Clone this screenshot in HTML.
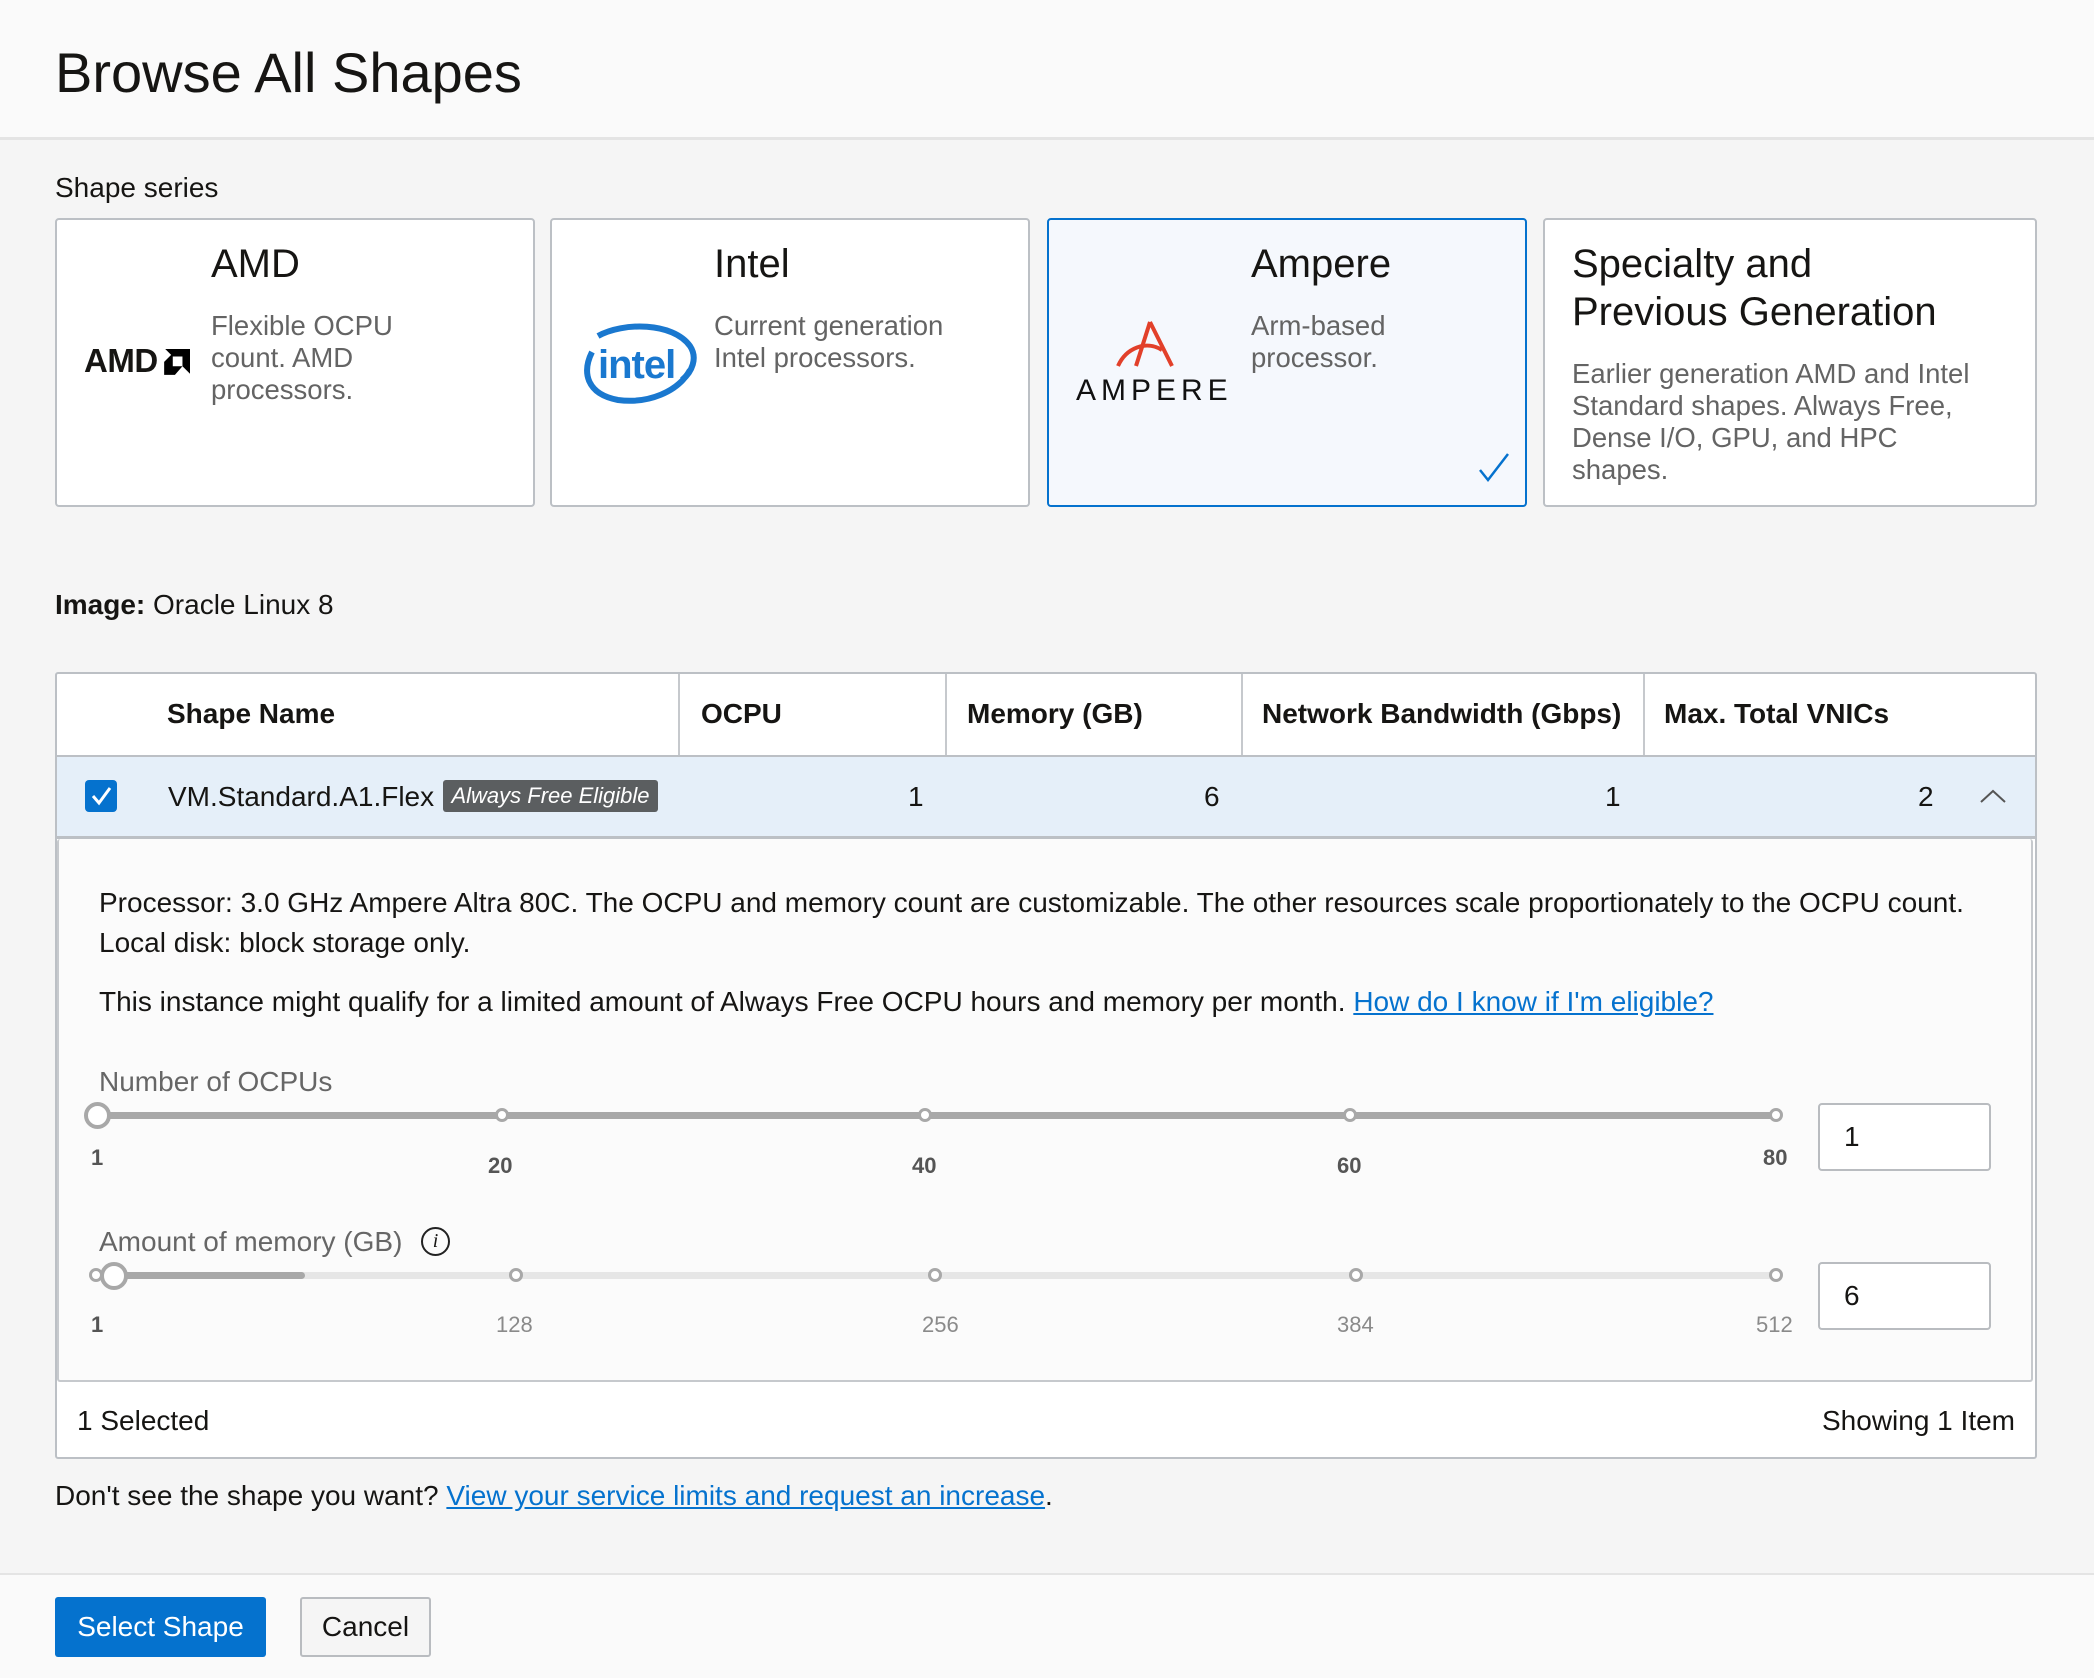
<!DOCTYPE html>
<html><head><meta charset="utf-8"><style>
*{margin:0;padding:0;box-sizing:border-box}
body{width:2094px;height:1678px;background:#f5f5f5;font-family:"Liberation Sans",Arial,sans-serif;color:#161513;position:relative;overflow:hidden}
.a{position:absolute;white-space:nowrap}
.hdr{position:absolute;left:0;top:0;width:2094px;height:140px;background:#fafafa;border-bottom:3px solid #e4e4e4}
.card{position:absolute;top:218px;height:289px;width:480px;background:#fff;border:2px solid #bcc0c5;border-radius:4px}
.ct{font-size:40px;line-height:48px;color:#161513}
.cd{font-size:27.5px;line-height:32px;color:#646464;white-space:normal}
.b28{font-size:28px;line-height:34px}
.hd{font-weight:bold;font-size:28px;line-height:34px;top:697px}
.v{font-size:28px;line-height:34px;top:780px}
.lbl{font-size:22px;font-weight:bold;color:#555;line-height:26px}
.lbl2{font-size:22px;color:#8a8a8a;line-height:26px}
.tick{position:absolute;width:14px;height:14px;border-radius:50%;border:3px solid #a8a8a8;background:#fff}
.inp{position:absolute;left:1818px;width:173px;height:68px;background:#fff;border:2px solid #b9bcc0;border-radius:4px;font-size:28px;line-height:64px;padding-left:24px}
a{color:#0572ce;text-decoration:underline}
</style></head><body>
<div class="hdr"></div>
<div class="a" style="left:55px;top:40px;font-size:56px;line-height:66px">Browse All Shapes</div>
<div class="a b28" style="left:55px;top:171px">Shape series</div>

<div class="card" style="left:55px"></div>
<div class="card" style="left:550px"></div>
<div class="card" style="left:1047px;background:#f5f8fd;border-color:#0572ce"></div>
<div class="card" style="left:1543px;width:494px"></div>

<!-- AMD -->
<div class="a" style="left:84px;top:343px;font-size:33px;font-weight:bold;line-height:36px;letter-spacing:-0.5px">AMD</div>
<svg class="a" style="left:162px;top:349px" width="28" height="28" viewBox="0 0 26 26"><path d="M3 0H26V23L19 16V7H10Z" fill="#000"/><path d="M2 12L10 4V16H19L12 24H2Z" fill="#000"/></svg>
<div class="a ct" style="left:211px;top:240px">AMD</div>
<div class="a cd" style="left:211px;top:310px;width:300px">Flexible OCPU<br>count. AMD<br>processors.</div>
<!-- Intel -->
<svg class="a" style="left:578px;top:322px" width="120" height="82" viewBox="0 0 120 82"><path d="M14 30C4 50 8 72 40 78C70 82 100 70 112 48" fill="none" stroke="#1a78cf" stroke-width="6"/><path d="M20 14C45 0 95 0 112 24C120 36 114 50 104 58" fill="none" stroke="#1a78cf" stroke-width="6"/><text x="20" y="56" font-family="Liberation Sans" font-weight="bold" font-size="40" fill="#1a78cf" letter-spacing="-1">intel</text></svg>
<div class="a ct" style="left:714px;top:240px">Intel</div>
<div class="a cd" style="left:714px;top:310px;width:300px">Current generation<br>Intel processors.</div>
<!-- Ampere -->
<svg class="a" style="left:1110px;top:320px" width="80" height="50" viewBox="0 0 80 50"><path d="M40 2L62 46" stroke="#e2402a" stroke-width="4" fill="none"/><path d="M40 2L26 46" stroke="#e2402a" stroke-width="4" fill="none"/><path d="M8 46C16 28 36 20 52 30" stroke="#e2402a" stroke-width="4" fill="none"/></svg>
<div class="a" style="left:1076px;top:374px;font-size:30px;line-height:34px;letter-spacing:5px;color:#111">AMPERE</div>
<div class="a ct" style="left:1251px;top:240px">Ampere</div>
<div class="a cd" style="left:1251px;top:310px;width:260px">Arm-based<br>processor.</div>
<svg class="a" style="left:1478px;top:452px" width="32" height="32" viewBox="0 0 32 32"><path d="M2 18L10 28L30 2" fill="none" stroke="#0572ce" stroke-width="2.5"/></svg>
<!-- Specialty -->
<div class="a ct" style="left:1572px;top:240px">Specialty and<br>Previous Generation</div>
<div class="a cd" style="left:1572px;top:358px;width:420px">Earlier generation AMD and Intel Standard shapes. Always Free, Dense I/O, GPU, and HPC shapes.</div>

<div class="a b28" style="left:55px;top:588px"><b>Image:</b> Oracle Linux 8</div>

<!-- table -->
<div class="a" style="left:55px;top:672px;width:1982px;height:787px;background:#fff;border:2px solid #bcc0c5;border-radius:3px"></div>
<div class="a" style="left:57px;top:755px;width:1978px;height:84px;background:#e5eff9;border-top:2px solid #bcc0c5;border-bottom:3px solid #bcc0c5"></div>
<div class="a" style="left:678px;top:674px;width:2px;height:81px;background:#c6c9cd"></div>
<div class="a" style="left:945px;top:674px;width:2px;height:81px;background:#c6c9cd"></div>
<div class="a" style="left:1241px;top:674px;width:2px;height:81px;background:#c6c9cd"></div>
<div class="a" style="left:1643px;top:674px;width:2px;height:81px;background:#c6c9cd"></div>
<div class="a hd" style="left:167px">Shape Name</div>
<div class="a hd" style="left:701px">OCPU</div>
<div class="a hd" style="left:967px">Memory (GB)</div>
<div class="a hd" style="left:1262px">Network Bandwidth (Gbps)</div>
<div class="a hd" style="left:1664px">Max. Total VNICs</div>

<div class="a" style="left:85px;top:780px;width:32px;height:32px;background:#0572ce;border-radius:4px"></div>
<svg class="a" style="left:85px;top:780px" width="32" height="32" viewBox="0 0 32 32"><path d="M8 16L14 23L25 8" fill="none" stroke="#fff" stroke-width="3"/></svg>
<div class="a v" style="left:168px">VM.Standard.A1.Flex</div>
<div class="a" style="left:443px;top:780px;width:215px;height:32px;background:#5b5e60;border-radius:3px;color:#fff;font-style:italic;font-size:22px;line-height:32px;text-align:center">Always Free Eligible</div>
<div class="a v" style="left:908px">1</div>
<div class="a v" style="left:1204px">6</div>
<div class="a v" style="left:1605px">1</div>
<div class="a v" style="left:1918px">2</div>
<svg class="a" style="left:1978px;top:786px" width="30" height="20" viewBox="0 0 30 20"><path d="M3 16L15 5L27 16" fill="none" stroke="#555" stroke-width="2"/></svg>

<!-- expanded -->
<div class="a" style="left:57px;top:839px;width:1976px;height:543px;background:#fbfbfb;border:2px solid #c6c9cd;border-top:none;border-radius:3px"></div>
<div class="a b28" style="left:99px;top:883px;line-height:40px">Processor: 3.0 GHz Ampere Altra 80C. The OCPU and memory count are customizable. The other resources scale proportionately to the OCPU count.<br>Local disk: block storage only.</div>
<div class="a b28" style="left:99px;top:985px">This instance might qualify for a limited amount of Always Free OCPU hours and memory per month. <a>How do I know if I'm eligible?</a></div>

<div class="a b28" style="left:99px;top:1065px;color:#666">Number of OCPUs</div>
<div class="a" style="left:97px;top:1112px;width:1679px;height:7px;background:#a8a8a8;border-radius:4px"></div>
<div class="tick" style="left:495px;top:1108px"></div>
<div class="tick" style="left:918px;top:1108px"></div>
<div class="tick" style="left:1343px;top:1108px"></div>
<div class="tick" style="left:1769px;top:1108px"></div>
<div class="a" style="left:84px;top:1102px;width:27px;height:27px;border-radius:50%;border:4px solid #a8a8a8;background:#fff"></div>
<div class="a lbl" style="left:91px;top:1145px">1</div>
<div class="a lbl" style="left:488px;top:1153px">20</div>
<div class="a lbl" style="left:912px;top:1153px">40</div>
<div class="a lbl" style="left:1337px;top:1153px">60</div>
<div class="a lbl" style="left:1763px;top:1145px">80</div>
<div class="inp" style="top:1103px">1</div>

<div class="a b28" style="left:99px;top:1225px;color:#666">Amount of memory (GB)</div>
<div class="a" style="left:421px;top:1227px;width:29px;height:29px;border-radius:50%;border:2px solid #222;font-family:'Liberation Serif',serif;font-style:italic;font-size:20px;line-height:25px;text-align:center">i</div>
<div class="a" style="left:97px;top:1272px;width:1679px;height:7px;background:#e6e6e6;border-radius:4px"></div>
<div class="a" style="left:97px;top:1272px;width:208px;height:7px;background:#a8a8a8;border-radius:4px"></div>
<div class="tick" style="left:89px;top:1268px"></div>
<div class="tick" style="left:509px;top:1268px"></div>
<div class="tick" style="left:928px;top:1268px"></div>
<div class="tick" style="left:1349px;top:1268px"></div>
<div class="tick" style="left:1769px;top:1268px"></div>
<div class="a" style="left:100px;top:1262px;width:28px;height:28px;border-radius:50%;border:4px solid #a8a8a8;background:#fff"></div>
<div class="a lbl" style="left:91px;top:1312px">1</div>
<div class="a lbl2" style="left:496px;top:1312px">128</div>
<div class="a lbl2" style="left:922px;top:1312px">256</div>
<div class="a lbl2" style="left:1337px;top:1312px">384</div>
<div class="a lbl2" style="left:1756px;top:1312px">512</div>
<div class="inp" style="top:1262px">6</div>

<div class="a b28" style="left:77px;top:1404px">1 Selected</div>
<div class="a b28" style="right:79px;top:1404px">Showing 1 Item</div>

<div class="a b28" style="left:55px;top:1479px">Don't see the shape you want? <a>View your service limits and request an increase</a>.</div>

<div class="a" style="left:0;top:1573px;width:2094px;height:105px;background:#fafafa;border-top:2px solid #e4e4e4"></div>
<div class="a" style="left:55px;top:1597px;width:211px;height:60px;background:#0572ce;border-radius:3px;color:#fff;font-size:28px;line-height:60px;text-align:center">Select Shape</div>
<div class="a" style="left:300px;top:1597px;width:131px;height:60px;background:#f5f5f5;border:2px solid #b9bcc0;border-radius:3px;font-size:28px;line-height:56px;text-align:center">Cancel</div>
</body></html>
